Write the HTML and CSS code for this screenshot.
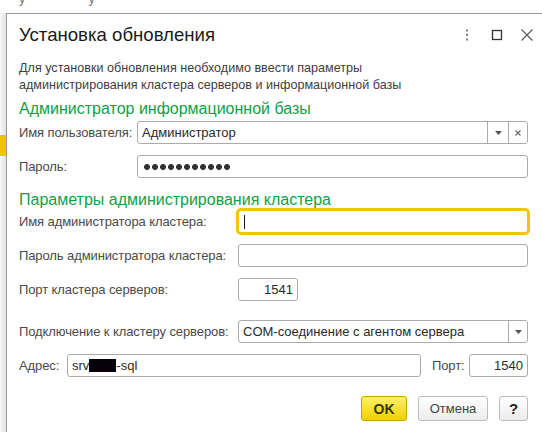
FILE: index.html
```html
<!DOCTYPE html>
<html lang="ru">
<head>
    <meta charset="UTF-8">
    <meta name="viewport" content="width=device-width, initial-scale=1.0">
    <title>Установка обновления</title>
    <link rel="stylesheet" href="styles.css">
</head>
<body>
    <div class="topline"><span class="topline-a">у</span><span class="topline-b">у</span></div>

    <div class="screen">
        <div class="side"><div class="side-mark"></div></div>

        <div class="dialog">
            <div class="dialog-head">
                <div class="dialog-title">Установка обновления</div>
                <div class="head-icons">
                    <svg class="head-icon" width="14" height="14" viewBox="0 0 14 14">
                        <rect x="6" y="1.5" width="2" height="2" fill="#808080"/>
                        <rect x="6" y="6" width="2" height="2" fill="#808080"/>
                        <rect x="6" y="10.5" width="2" height="2" fill="#808080"/>
                    </svg>
                    <svg class="head-icon" width="14" height="14" viewBox="0 0 14 14">
                        <rect x="2.5" y="2.5" width="9" height="9" fill="none" stroke="#333" stroke-width="1.3"/>
                    </svg>
                    <svg class="head-icon" width="14" height="14" viewBox="0 0 14 14">
                        <path d="M1.5 1.5 L12.5 12.5 M12.5 1.5 L1.5 12.5" stroke="#555" stroke-width="1.1" fill="none"/>
                    </svg>
                </div>
            </div>

            <div class="dialog-body">
                <p class="note">Для установки обновления необходимо ввести параметры<br>администрирования кластера серверов и информационной базы</p>

                <h2 class="group-title">Администратор информационной базы</h2>

                <div class="row row-ib">
                    <label class="row-label">Имя пользователя:</label>
                    <div class="field field-combo">
                        <span class="field-text">Администратор</span>
                        <span class="field-btn">
                            <svg width="7" height="4" viewBox="0 0 7 4"><path d="M0 0 H7 L3.5 4 Z" fill="#555"/></svg>
                        </span>
                        <span class="field-btn field-clear">
                            <svg width="6" height="6" viewBox="0 0 6 6"><path d="M0.5 0.5 L5.5 5.5 M5.5 0.5 L0.5 5.5" stroke="#666" stroke-width="1.1"/></svg>
                        </span>
                    </div>
                </div>

                <div class="row row-ib row-gap">
                    <label class="row-label">Пароль:</label>
                    <div class="field">
                        <span class="dots"></span>
                    </div>
                </div>

                <h2 class="group-title group-title-second">Параметры администрирования кластера</h2>

                <div class="row row-cl row-first">
                    <label class="row-label">Имя администратора кластера:</label>
                    <div class="field field-focus"><span class="caret"></span></div>
                </div>

                <div class="row row-cl row-gap">
                    <label class="row-label">Пароль администратора кластера:</label>
                    <div class="field"></div>
                </div>

                <div class="row row-cl row-gap">
                    <label class="row-label">Порт кластера серверов:</label>
                    <div class="field field-port"><span class="field-text field-num">1541</span></div>
                </div>

                <div class="row row-cl row-gap-wide">
                    <label class="row-label">Подключение к кластеру серверов:</label>
                    <div class="field field-combo">
                        <span class="field-text">COM-соединение с агентом сервера</span>
                        <span class="field-btn field-btn-last">
                            <svg width="7" height="4" viewBox="0 0 7 4"><path d="M0 0 H7 L3.5 4 Z" fill="#555"/></svg>
                        </span>
                    </div>
                </div>

                <div class="row row-gap">
                    <label class="row-label label-addr">Адрес:</label>
                    <div class="field field-addr">
                        <span class="field-text">srv<span class="redacted"></span>-sql</span>
                    </div>
                    <label class="row-label label-port">Порт:</label>
                    <div class="field field-port-small"><span class="field-text field-num">1540</span></div>
                </div>

                <div class="actions">
                    <button class="btn btn-ok">OK</button>
                    <button class="btn">Отмена</button>
                    <button class="btn btn-help">?</button>
                </div>
            </div>
        </div>
    </div>
</body>
</html>
```

FILE: styles.css
```css
body {
    margin: 0;
    width: 542px;
    height: 432px;
    overflow: hidden;
    font-family: 'Liberation Sans', Arial, sans-serif;
    font-size: 13px;
    color: #333;
    background-color: #fff;
}

.topline {
    height: 13px;
    overflow: hidden;
    color: #777;
    font-size: 13px;
    line-height: 13px;
}

.topline-a,
.topline-b {
    display: inline-block;
    margin-top: -8px;
    vertical-align: top;
}

.topline-a {
    margin-left: 19px;
}

.topline-b {
    margin-left: 63px;
}

.screen {
    display: flex;
    height: 419px;
}

.side {
    width: 6px;
    flex-shrink: 0;
    background: linear-gradient(to right, #f8f8f8, #e2e2e2);
}

.side-mark {
    margin-top: 122px;
    height: 19px;
    background-color: #f3c300;
    border-top: 1px solid #bcbcbc;
    border-bottom: 1px solid #bcbcbc;
}

.dialog {
    flex: 1;
    border-left: 1px solid #9c9c9c;
    border-top: 1px solid #9c9c9c;
    background-color: #fff;
}

/* header */
.dialog-head {
    display: flex;
    align-items: center;
    justify-content: space-between;
    padding: 10px 8px 0 12px;
}

.dialog-title {
    font-size: 18.6px;
    line-height: 22px;
    color: #1a1a1a;
}

.head-icons {
    display: flex;
    align-items: center;
    gap: 16px;
}

.head-icon {
    display: block;
}

/* body */
.dialog-body {
    padding: 0 14px 0 12px;
}

.note {
    margin: 14px 0 0;
    font-size: 12.6px;
    line-height: 17px;
    color: #404040;
}

.group-title {
    margin: 6px 0 0;
    font-size: 16px;
    font-weight: normal;
    line-height: 18px;
    color: #12a048;
}

.group-title-second {
    margin-top: 13px;
}

.row {
    display: flex;
    align-items: center;
    margin-top: 3px;
}

.row-gap {
    margin-top: 11px;
}

.row-first {
    margin-top: 1px;
}

.row-gap-wide {
    margin-top: 19px;
}

.row-label {
    flex-shrink: 0;
    color: #4a4a4a;
    letter-spacing: -0.1px;
}

.row-ib .row-label {
    width: 118px;
}

.row-cl .row-label {
    width: 219px;
}

.field {
    flex: 1;
    display: flex;
    align-items: center;
    height: 23px;
    box-sizing: border-box;
    border: 1px solid #ababab;
    border-radius: 3px;
    background-color: #fff;
    overflow: hidden;
}

.field-text {
    flex: 1;
    padding: 0 4px;
    color: #2a2a2a;
    white-space: nowrap;
}

.field-num {
    text-align: right;
}

.field-btn {
    width: 21px;
    align-self: stretch;
    box-sizing: border-box;
    border-left: 1px solid #ababab;
    display: flex;
    align-items: center;
    justify-content: center;
}

.field-clear,
.field-btn-last {
    width: 19px;
}

.dots {
    display: block;
    width: 88px;
    height: 8px;
    margin-left: 5px;
    background-image: radial-gradient(circle, #333 2.7px, transparent 3.2px);
    background-size: 8px 8px;
}

.field-focus {
    border-color: #f2c40f;
    box-shadow: 0 0 0 2px #f2c40f;
    overflow: visible;
}

.caret {
    display: block;
    width: 1px;
    height: 14px;
    margin-left: 5px;
    background-color: #111;
}

.field-port {
    flex: 0 0 60px;
}

.label-addr {
    width: 48px;
}

.field-addr {
    flex: 0 0 354px;
}

.redacted {
    display: inline-block;
    width: 27px;
    height: 13px;
    vertical-align: -2px;
    background-color: #06000a;
}

.label-port {
    margin-left: 11px;
    width: 37px;
}

.field-port-small {
    flex: 0 0 59px;
}

/* buttons */
.actions {
    display: flex;
    justify-content: flex-end;
    gap: 11px;
    margin-top: 19px;
}

.btn {
    height: 25px;
    padding: 0;
    font-family: 'Liberation Sans', Arial, sans-serif;
    font-size: 13px;
    color: #444;
    border: 1px solid #bdbdbd;
    border-radius: 3px;
    background: linear-gradient(#ffffff, #ececec);
    width: 70px;
}

.btn-ok {
    width: 46px;
    font-size: 14px;
    font-weight: bold;
    color: #3b3400;
    border-color: #c7a500;
    background: linear-gradient(#fff16a, #f1cf00);
}

.btn-help {
    width: 29px;
    font-size: 15px;
    font-weight: bold;
    color: #222;
}
```
